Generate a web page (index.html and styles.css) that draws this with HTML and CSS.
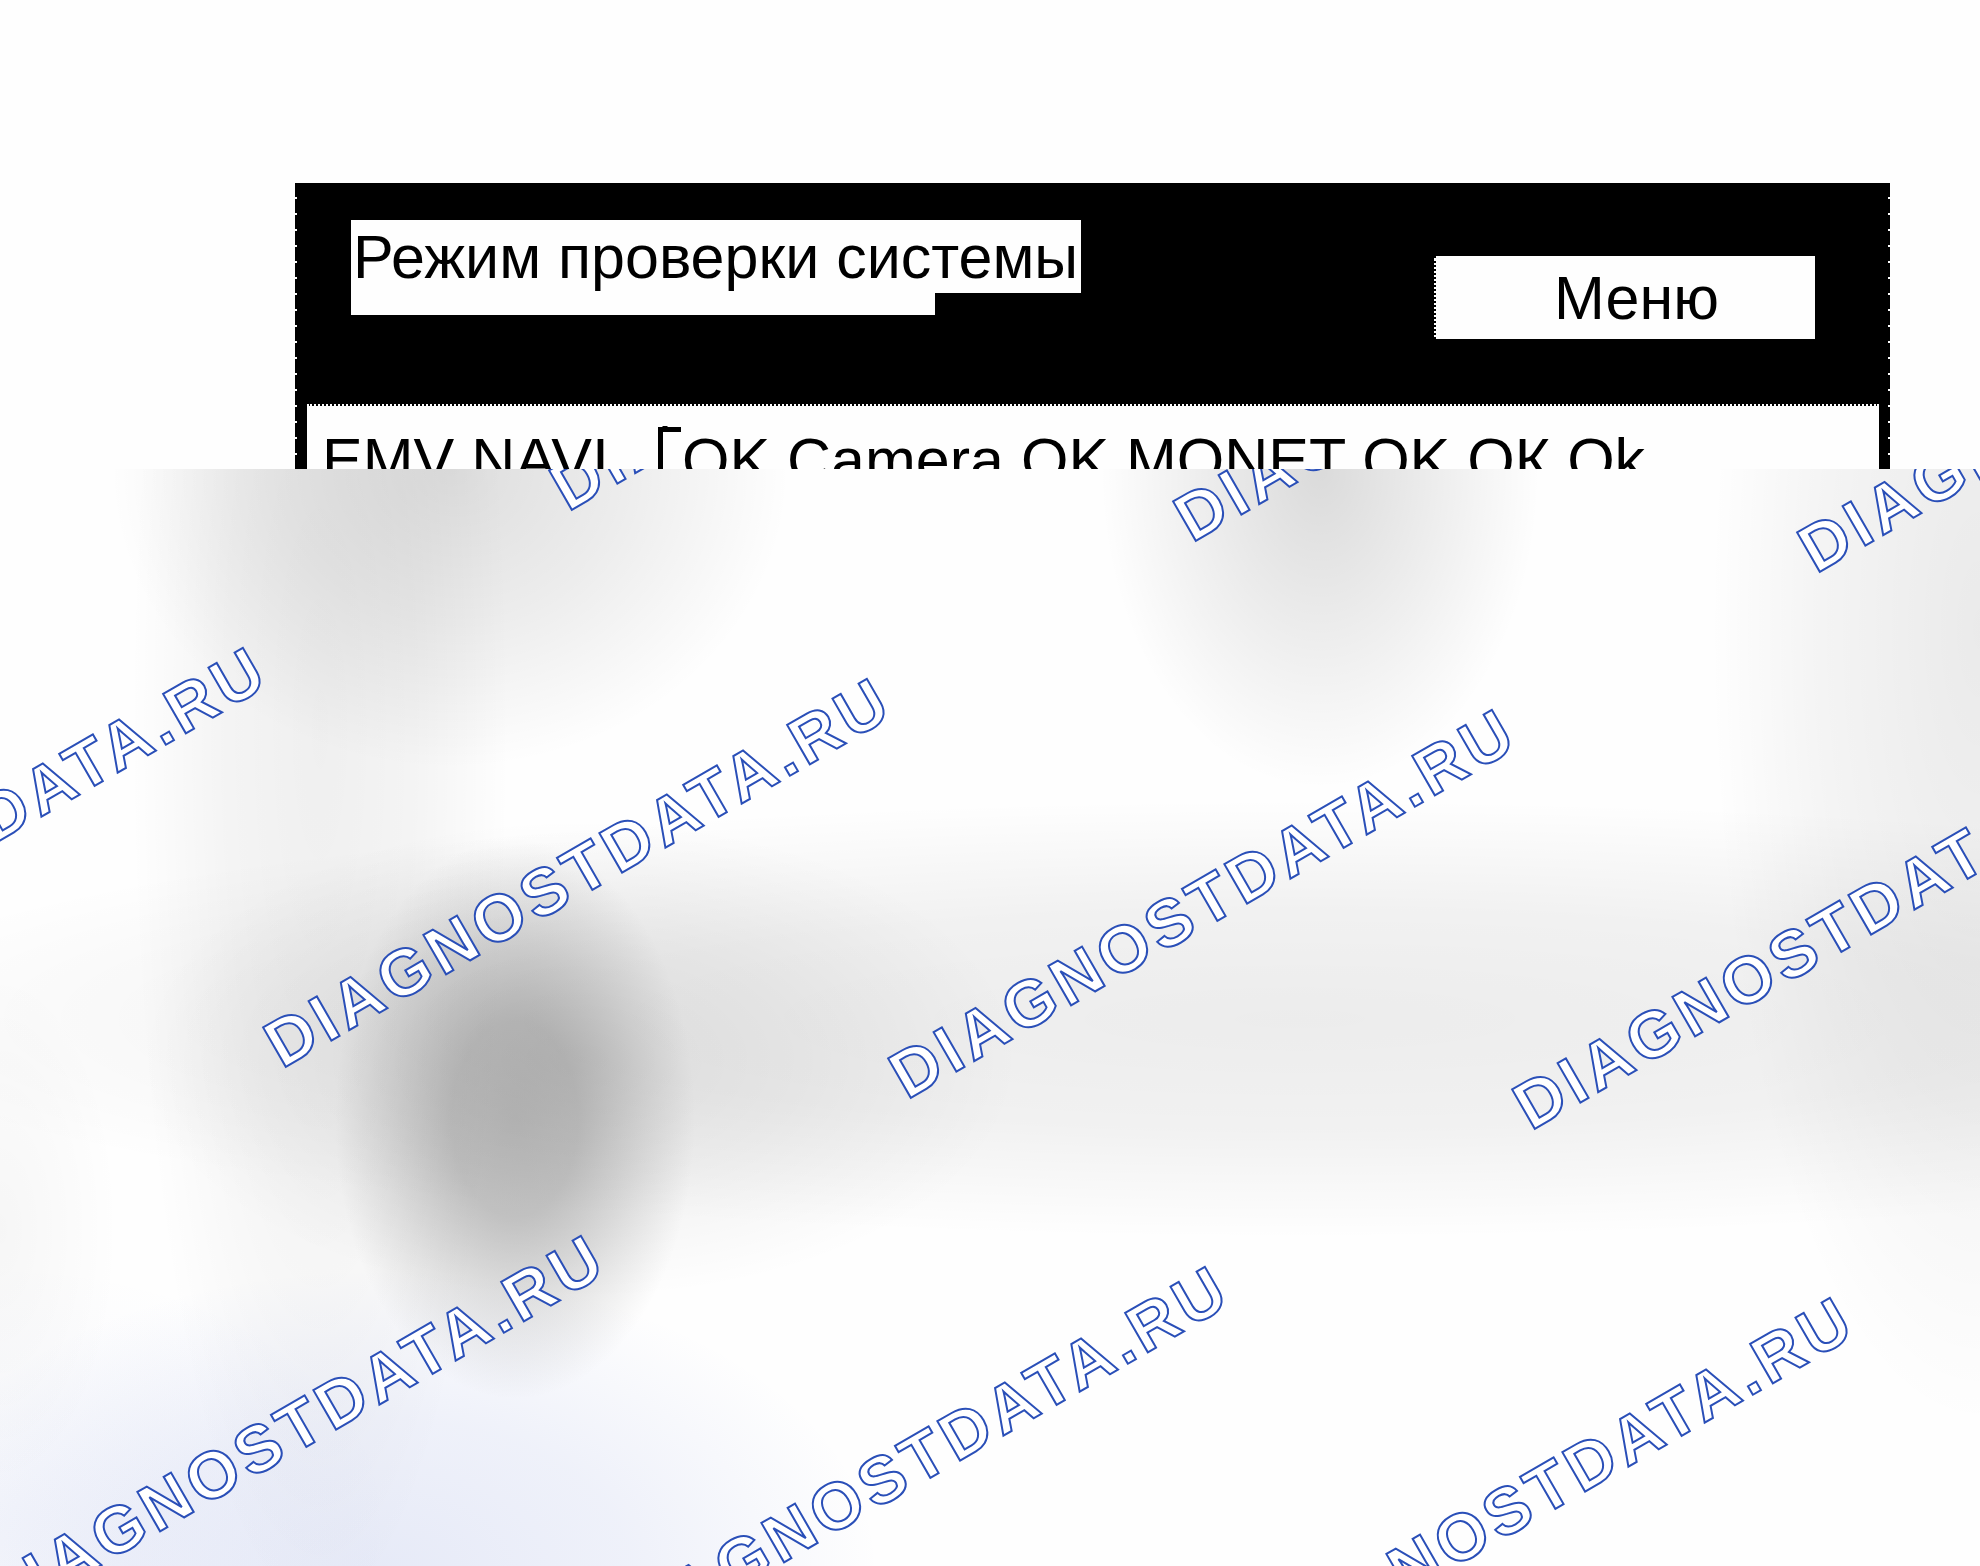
FILE: index.html
```
<!DOCTYPE html>
<html lang="ru">
<head>
    <meta charset="UTF-8">
    <meta name="viewport" content="width=device-width, initial-scale=1.0">
    <title>Режим проверки системы</title>
    <link rel="stylesheet" href="styles.css">
</head>
<body>
    <main class="panel">
        <header class="panel-header">
            <h1 class="title">Режим проверки системы</h1>
            <button type="button" class="menu-button">Меню</button>
        </header>
        <div class="status-row">
            <span>EMV NAVI</span>
            <svg class="corner" width="24" height="46" viewBox="0 0 24 46" aria-hidden="true">
                <path d="M2.500 46V4.500H23M7 1V6" fill="none" stroke="#000" stroke-width="5"/>
            </svg>
            <span>OK Camera OK MONET OK OК Ok</span>
        </div>
    </main>

    <section class="preview">
        <svg class="watermarks" width="100%" height="100%">
            <text transform="translate(568 43) rotate(-30)">DIAGNOSTDATA.RU</text>
            <text transform="translate(1192 74) rotate(-30)">DIAGNOSTDATA.RU</text>
            <text transform="translate(1816 105) rotate(-30)">DIAGNOSTDATA.RU</text>
            <text transform="translate(-342 569) rotate(-30)">DIAGNOSTDATA.RU</text>
            <text transform="translate(282 600) rotate(-30)">DIAGNOSTDATA.RU</text>
            <text transform="translate(907 631) rotate(-30)">DIAGNOSTDATA.RU</text>
            <text transform="translate(1531 662) rotate(-30)">DIAGNOSTDATA.RU</text>
            <text transform="translate(-4 1157) rotate(-30)">DIAGNOSTDATA.RU</text>
            <text transform="translate(620 1188) rotate(-30)">DIAGNOSTDATA.RU</text>
            <text transform="translate(1245 1219) rotate(-30)">DIAGNOSTDATA.RU</text>
        </svg>
    </section>
</body>
</html>
```
FILE: styles.css
```
* {
    box-sizing: border-box;
}

body {
    margin: 0;
    min-height: 100vh;
    display: flex;
    flex-direction: column;
    background: #fefefe;
    color: #000;
    font-family: "Liberation Sans", Arial, sans-serif;
    font-size: 61px;
}

/* Panel */
.panel {
    margin: 183px 90px 0 295px;
    padding: 0 11px 0 12px;
    background:
        repeating-linear-gradient(#000 0 14px, #fefefe 14px 16px) left / 2px 100% no-repeat,
        repeating-linear-gradient(#000 0 14px, #fefefe 14px 16px) right / 2px 100% no-repeat,
        #000;
}

.panel-header {
    display: flex;
    justify-content: space-between;
    align-items: flex-start;
    padding: 37px 64px 65px 44px;
}

.title {
    margin: 0;
    padding: 1px 3px 0 2px;
    background: #fefefe;
    font-size: 61px;
    font-weight: normal;
    line-height: 72px;
    position: relative;
    white-space: nowrap;
}

/* lower step of the title plate */
.title::after {
    content: "";
    position: absolute;
    top: 100%;
    left: 0;
    width: 80%;
    height: 22px;
    background: #fefefe;
}

.menu-button {
    width: 381px;
    margin-top: 36px;
    padding: 2px 0 0 22px;
    border: 0;
    border-left: 2px dotted #000;
    background: #fefefe;
    color: #000;
    font: inherit;
    line-height: 81px;
    cursor: pointer;
}

.status-row {
    display: flex;
    height: 65px;
    padding: 19px 15px 0;
    overflow: hidden;
    border-top: 2px dotted #fefefe;
    background: #fefefe;
    background-clip: padding-box;
    line-height: 70px;
    white-space: nowrap;
}

.corner {
    flex: none;
    margin: 0 0 0 49px;
}

/* Soft backdrop with the watermark grid */
.preview {
    flex: 1;
    position: relative;
    overflow: hidden;
    background:
        radial-gradient(180px 280px at 515px 650px, rgba(90, 90, 90, 0.38), rgba(90, 90, 90, 0.34) 35%, rgba(90, 90, 90, 0.14) 72%, transparent),
        radial-gradient(340px 300px at 450px 0, rgba(0, 0, 0, 0.13), rgba(0, 0, 0, 0.07) 50%, transparent),
        radial-gradient(220px 320px at 1320px 0, rgba(0, 0, 0, 0.14), rgba(0, 0, 0, 0.07) 50%, transparent),
        radial-gradient(440px 240px at 580px 590px, rgba(0, 0, 0, 0.09), rgba(0, 0, 0, 0.05) 50%, transparent),
        radial-gradient(1500px 220px at 1300px 550px, rgba(0, 0, 0, 0.07), rgba(0, 0, 0, 0.05) 50%, transparent),
        radial-gradient(190px 900px at 320px 260px, rgba(0, 0, 0, 0.06), rgba(0, 0, 0, 0.04) 50%, transparent),
        radial-gradient(270px 800px at 100% 160px, rgba(0, 0, 0, 0.08), rgba(0, 0, 0, 0.04) 60%, transparent),
        radial-gradient(120px 260px at 0 760px, rgba(0, 0, 0, 0.03), transparent),
        radial-gradient(500px 300px at 380px 1100px, rgba(60, 90, 200, 0.12), rgba(60, 90, 200, 0.08) 50%, transparent),
        radial-gradient(400px 260px at 0 1050px, rgba(60, 90, 200, 0.04), transparent),
        #fefefe;
}

.watermarks {
    position: absolute;
    inset: 0;
}

.watermarks text {
    fill: #fff;
    stroke: #2a4fb8;
    stroke-width: 2px;
    font-size: 66px;
    font-weight: bold;
    letter-spacing: 5px;
}
```
